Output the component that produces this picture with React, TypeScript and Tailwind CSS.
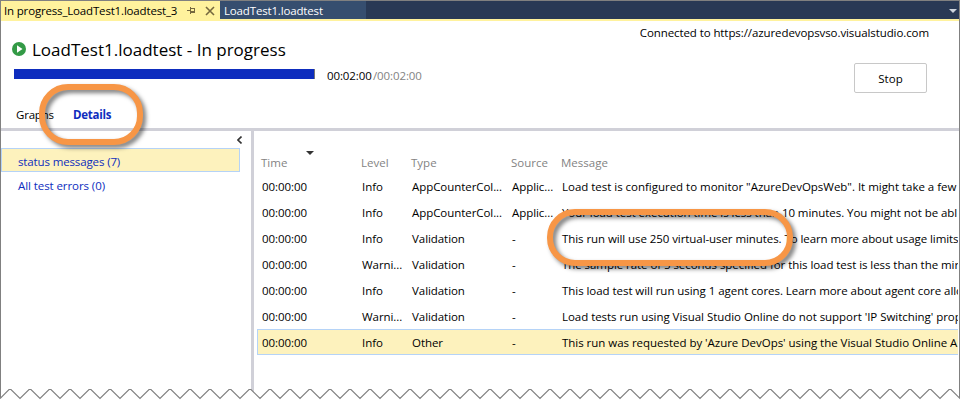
const rows = [
  { level: "Info", type: "AppCounterCol...", source: "Applic...", message: "Load test is configured to monitor \"AzureDevOpsWeb\". It might take a few", track: "tracking-[-0.02px]" },
  { level: "Info", type: "AppCounterCol...", source: "Applic...", message: "Your load test execution time is less than 10 minutes. You might not be abl", track: "tracking-[-0.055px]" },
  { level: "Info", type: "Validation", source: "-", message: "This run will use 250 virtual-user minutes. To learn more about usage limits", track: "tracking-[-0.075px]" },
  { level: "Warni...", type: "Validation", source: "-", message: "The sample rate of 5 seconds specified for this load test is less than the mir", track: "tracking-[-0.06px]" },
  { level: "Info", type: "Validation", source: "-", message: "This load test will run using 1 agent cores. Learn more about agent core allo", track: "tracking-[-0.05px]" },
  { level: "Warni...", type: "Validation", source: "-", message: "Load tests run using Visual Studio Online do not support 'IP Switching' prop", track: "tracking-[-0.04px]" },
  { level: "Info", type: "Other", source: "-", message: "This run was requested by 'Azure DevOps' using the Visual Studio Online A", track: "tracking-[-0.03px]", selected: true },
];

const columns = "grid grid-cols-[100px_50px_100px_50px_1fr]";

function TabStrip() {
  return (
    <div className="flex h-5 shrink-0 border-b-2 border-[#fff29d] bg-[#293955]">
      <div className="flex h-5 w-[219px] items-center bg-[#fff29d] pl-[3px]">
        <span className="w-[183px] tracking-[-0.17px] whitespace-nowrap">In progress_LoadTest1.loadtest_3</span>
        <svg width="9" height="8" viewBox="0 0 9 8" className="mr-[9px] shrink-0" fill="none" stroke="#75683f" shapeRendering="crispEdges">
          <path d="M0 3.5H3M3.5 0V7M3 1.5H8M7.5 1V6M3 4.5H8M3 5.5H8" />
        </svg>
        <svg width="10" height="10" viewBox="0 0 10 10" fill="none" stroke="#75683f" strokeWidth="1.6" className="shrink-0">
          <path d="M1 1L9 9M9 1L1 9" />
        </svg>
      </div>
      <div className="flex h-[18px] w-[146px] items-center bg-[#364e6f] pt-px pl-1 text-white">
        <span className="tracking-[-0.16px] whitespace-nowrap">LoadTest1.loadtest</span>
      </div>
      <svg width="8" height="4" viewBox="0 0 8 4" className="mt-2 mr-[2px] ml-auto" fill="#ced4dd">
        <path d="M0 0H8L4 4Z" />
      </svg>
    </div>
  );
}

function Header() {
  return (
    <div className="flex h-[107px] shrink-0 justify-between">
      <div className="flex flex-col">
        <div className="flex h-[48px] items-end pl-[11px]">
          <svg width="14" height="14" viewBox="0 0 14 14" className="mb-[13px]">
            <circle cx="7" cy="7" r="7" fill="#339a46" />
            <path d="M5 3.2L10.5 7L5 10.8Z" fill="#fff" />
          </svg>
          <h1 className="mb-[7px] ml-[6px] text-[17px] leading-6 whitespace-nowrap">LoadTest1.loadtest - In progress</h1>
        </div>
        <div className="flex h-[10px] pl-[13px]">
          <div className="h-[10px] w-[301px] border-r border-[#777] bg-[#0e2dbe]" />
          <div className="-mt-[1px] ml-3 flex leading-4 tracking-[-0.1px] whitespace-nowrap">
            <span className="w-[46px]">00:02:00</span>
            <span className="text-[#838383]">/00:02:00</span>
          </div>
        </div>
        <div className="mt-[27px] flex pl-[15px] leading-[18px]">
          <span className="w-[57px] tracking-[-0.2px]">Graphs</span>
          <span className="font-bold tracking-[-0.25px] text-[#0e2dbe]">Details</span>
        </div>
      </div>
      <div className="flex flex-col items-end pr-[30px]">
        <span className="mt-1 leading-4 tracking-[-0.09px] whitespace-nowrap">Connected to https://azuredevopsvso.visualstudio.com</span>
        <button className="mt-[22px] mr-[2px] h-[30px] w-[73px] rounded-[2px] border border-[#c8c8c8] bg-white pt-px">Stop</button>
      </div>
    </div>
  );
}

function Sidebar() {
  return (
    <div className="w-[250px] text-[#0e2dbe]">
      <div className="flex h-[17px] items-center justify-end pr-[9px]">
        <svg width="5" height="8" viewBox="0 0 5 8" fill="none" stroke="#333" strokeWidth="1.6">
          <path d="M4.5 .5L1 4L4.5 7.5" />
        </svg>
      </div>
      <div className="flex h-6 w-[239px] items-center border border-[#b5d3f7] bg-[#fdf2bd] pt-[3px] pl-4 tracking-[-0.13px]">status messages (7)</div>
      <div className="flex h-6 items-center pt-[3px] pl-[17px] tracking-[-0.08px]">All test errors (0)</div>
    </div>
  );
}

function Messages() {
  return (
    <div className="mr-px min-w-0 flex-1 overflow-hidden border-l-[3px] border-[#d0d0d8] pl-[3px]">
      <div className="flex h-5 items-end pl-[49px]">
        <svg width="8" height="4" viewBox="0 0 8 4" fill="#333" className="relative top-[4px]">
          <path d="M0 0H8L4 4Z" />
        </svg>
      </div>
      <div className={columns + " h-[22px] items-center pt-[2px] pl-1 text-[#838383]"}>
        <span>Time</span>
        <span>Level</span>
        <span>Type</span>
        <span>Source</span>
        <span>Message</span>
      </div>
      {rows.map((row, i) => (
        <div
          key={i}
          className={
            columns +
            " h-[26px] items-center border-y border-l pt-[2px] pl-1 tracking-[-0.06px] whitespace-nowrap " +
            (row.selected ? "border-[#b5d3f7] bg-[#fdf2bd]" : "border-transparent")
          }
        >
          <span>00:00:00</span>
          <span>{row.level}</span>
          <span>{row.type}</span>
          <span>{row.source}</span>
          <span className={row.track}>{row.message}</span>
        </div>
      ))}
    </div>
  );
}

function TornEdge() {
  const teeth = Array.from({ length: 49 }, (_, i) => `L${i * 20 + 9} 1.5H${i * 20 + 11}L${i * 20 + 20} 10.5`).join("");
  return (
    <svg width="960" height="12" viewBox="0 0 960 12" className="absolute bottom-0 left-0">
      <path d={`M0 10.5${teeth}V12H0Z`} fill="#fff" />
      <path d={`M0 10.5${teeth}`} fill="none" stroke="#808080" strokeWidth="1.2" />
    </svg>
  );
}

export default function App() {
  return (
    <div className="relative flex h-[400px] w-[960px] flex-col overflow-hidden bg-white font-['Open_Sans','Noto_Sans',sans-serif] text-[11.5px] text-black">
      <div className="flex min-h-0 flex-1 flex-col border-x border-t border-[#808080]">
        <TabStrip />
        <Header />
        <div className="flex min-h-0 flex-1 border-t-[3px] border-[#d0d0d8]">
          <Sidebar />
          <Messages />
        </div>
      </div>
      <TornEdge />
      <div className="absolute top-[84px] left-[39px] h-[61px] w-[104px] rounded-[29px] border-[6px] border-[#f79646] drop-shadow-[3px_3px_2px_rgba(0,0,0,0.5)]" />
      <div className="absolute top-[209px] left-[547px] h-[57px] w-[246px] rounded-[28px] border-[6px] border-[#f79646] drop-shadow-[3px_3px_2px_rgba(0,0,0,0.5)]" />
    </div>
  );
}
